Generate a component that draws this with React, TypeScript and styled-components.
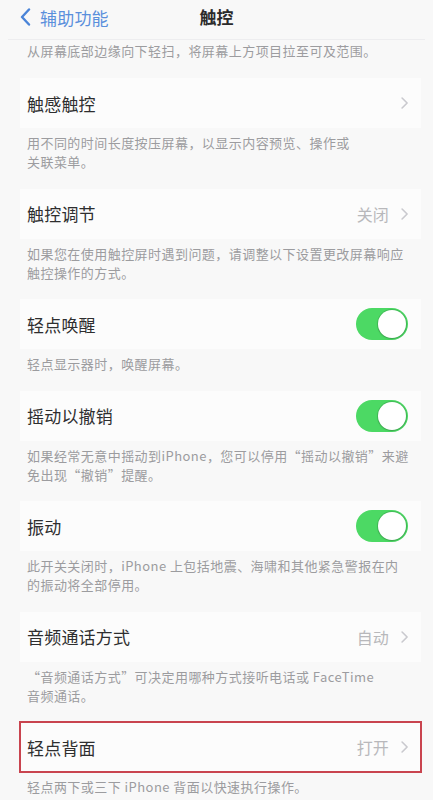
import React from 'react'
import styled, { createGlobalStyle } from 'styled-components'

const GlobalStyle = createGlobalStyle`
  html, body {
    margin: 0;
    padding: 0;
    background: #f8f8f8;
  }
  body {
    font-family: 'Noto Sans CJK SC', 'Noto Sans', sans-serif;
    -webkit-font-smoothing: antialiased;
  }
`

type Item = {
  title: string
  value?: string
  toggle?: boolean
  chevron?: boolean
  highlighted?: boolean
  desc: string[]
}

const items: Item[] = [
  {
    title: '触感触控',
    chevron: true,
    desc: ['用不同的时间长度按压屏幕，以显示内容预览、操作或', '关联菜单。'],
  },
  {
    title: '触控调节',
    value: '关闭',
    chevron: true,
    desc: ['如果您在使用触控屏时遇到问题，请调整以下设置更改屏幕响应', '触控操作的方式。'],
  },
  {
    title: '轻点唤醒',
    toggle: true,
    desc: ['轻点显示器时，唤醒屏幕。'],
  },
  {
    title: '摇动以撤销',
    toggle: true,
    desc: ['如果经常无意中摇动到iPhone，您可以停用“摇动以撤销”来避', '免出现“撤销”提醒。'],
  },
  {
    title: '振动',
    toggle: true,
    desc: ['此开关关闭时，iPhone 上包括地震、海啸和其他紧急警报在内', '的振动将全部停用。'],
  },
  {
    title: '音频通话方式',
    value: '自动',
    chevron: true,
    desc: ['“音频通话方式”可决定用哪种方式接听电话或 FaceTime', '音频通话。'],
  },
  {
    title: '轻点背面',
    value: '打开',
    chevron: true,
    highlighted: true,
    desc: ['轻点两下或三下 iPhone 背面以快速执行操作。'],
  },
]

const Chevron = ({ size = 12, color = '#c9c9ce', width = 1.6 }) => (
  <svg width={size * 0.6} height={size} viewBox="0 0 7 12" fill="none">
    <path d="M1 1 L6 6 L1 11" stroke={color} strokeWidth={width} strokeLinecap="round" strokeLinejoin="round" />
  </svg>
)

const App: React.FC = () => {
  return (
    <>
      <GlobalStyle />
      <Page>
        <NavBar>
          <BackButton>
            <svg width="11" height="18" viewBox="0 0 11 18" fill="none">
              <path d="M9 1.5 L2 9 L9 16.5" stroke="#4a84d8" strokeWidth="2.4" strokeLinecap="round" strokeLinejoin="round" />
            </svg>
            <BackLabel>辅助功能</BackLabel>
          </BackButton>
          <NavTitle>触控</NavTitle>
        </NavBar>

        <TopNote>从屏幕底部边缘向下轻扫，将屏幕上方项目拉至可及范围。</TopNote>

        {items.map((item) => (
          <Section key={item.title}>
            <Row $highlighted={item.highlighted}>
              <RowTitle>{item.title}</RowTitle>
              <RowRight>
                {item.value && <RowValue>{item.value}</RowValue>}
                {item.chevron && <Chevron />}
                {item.toggle && (
                  <Switch>
                    <Knob />
                  </Switch>
                )}
              </RowRight>
            </Row>
            <Footer>
              {item.desc.map((line, i) => (
                <React.Fragment key={i}>
                  {i > 0 && <br />}
                  {line}
                </React.Fragment>
              ))}
            </Footer>
          </Section>
        ))}
      </Page>
    </>
  )
}

const Page = styled.div`
  width: 433px;
  min-height: 800px;
  background: #f8f8f8;
  overflow: hidden;
`

const NavBar = styled.div`
  height: 40px;
  position: relative;
  display: flex;
  align-items: center;
  justify-content: center;
  border-bottom: 1px solid #ededef;
  margin: 0 8px;
  box-sizing: border-box;
`

const BackButton = styled.div`
  position: absolute;
  left: 12px;
  top: 0;
  height: 34px;
  display: flex;
  align-items: center;
  gap: 9px;
`

const BackLabel = styled.span`
  font-size: 17px;
  color: #5a8fdc;
  letter-spacing: 0.2px;
`

const NavTitle = styled.span`
  font-size: 17px;
  font-weight: 600;
  color: #2b2b2b;
  margin-top: -6px;
`

const TopNote = styled.div`
  padding: 1px 20px 18px 27px;
  font-size: 13px;
  letter-spacing: 0.45px;
  line-height: 19px;
  color: #9c9c9f;
`

const Section = styled.div`
  display: flex;
  flex-direction: column;
`

const Row = styled.div<{ $highlighted?: boolean }>`
  height: 50px;
  margin: 0 12px 0 20px;
  padding: 0 13px 0 7px;
  display: flex;
  align-items: center;
  justify-content: space-between;
  background: #fcfcfc;
  outline: ${(p) => (p.$highlighted ? '2px solid #c9444f' : 'none')};
  outline-offset: -1px;
`

const RowTitle = styled.span`
  font-size: 17px;
  color: #2e2e2f;
  letter-spacing: 0.2px;
`

const RowRight = styled.div`
  display: flex;
  align-items: center;
  gap: 12px;
`

const RowValue = styled.span`
  font-size: 16px;
  color: #b8b8bb;
`

const Switch = styled.div`
  width: 52px;
  height: 32px;
  border-radius: 16px;
  background: #4cd964;
  display: flex;
  align-items: center;
  justify-content: flex-end;
  padding: 2px;
  box-sizing: border-box;
`

const Knob = styled.div`
  width: 28px;
  height: 28px;
  border-radius: 50%;
  background: #ffffff;
  box-shadow: 0 0 0 1px rgba(0, 0, 0, 0.12), 0 1px 2px rgba(0, 0, 0, 0.15);
`

const Footer = styled.div`
  padding: 5px 20px 17.5px 27px;
  font-size: 13px;
  letter-spacing: 0.45px;
  line-height: 19px;
  color: #9c9c9f;
`

export default App
